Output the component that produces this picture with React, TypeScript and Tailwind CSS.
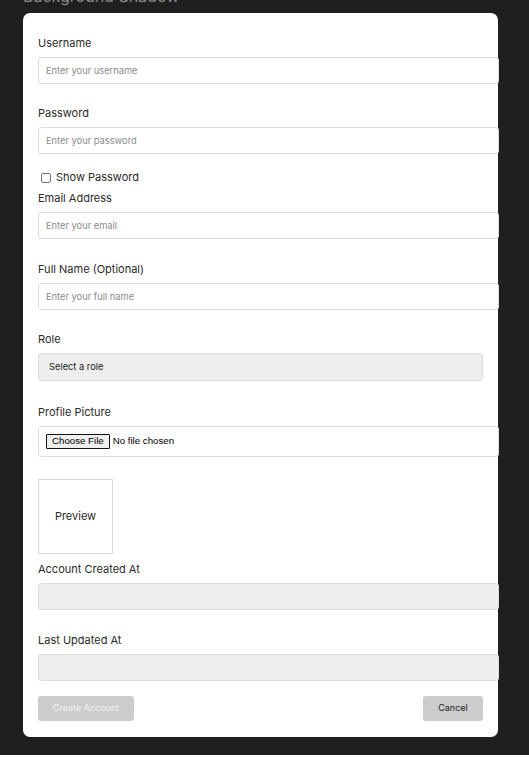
import React from "react";

const font = { fontFamily: "Inter, 'Noto Sans', sans-serif" };

function Label({ children }: { children: React.ReactNode }) {
  return (
    <div className="text-[11px] leading-[15px] text-[#2a2a2a] mb-[6px]">{children}</div>
  );
}

function TextInput({ placeholder, type = "text", disabled = false }: { placeholder?: string; type?: string; disabled?: boolean }) {
  return (
    <input
      type={type}
      placeholder={placeholder}
      disabled={disabled}
      className={
        "block w-[461px] h-[27px] px-[7px] border border-[#dcdcdc] rounded-[3px] text-[9.3px] text-[#222] placeholder:text-[#8a8a8a] outline-none " +
        (disabled ? "bg-[#efefef]" : "bg-white")
      }
    />
  );
}

export default function App() {
  return (
    <div style={font}>
      <div className="bg-[#1f1f1f] pb-[18px]">
        <div className="pl-[23px] -mt-[14px] text-[16px] leading-[20px] text-[#8c8c8c] h-[20px]">Background Shadow</div>
        <div className="ml-[23px] mt-[7px] w-[475px] bg-white rounded-[7px] px-[15px] pt-[22.5px] pb-[16px]">
          <Label>Username</Label>
          <TextInput placeholder="Enter your username" />

          <div className="mt-[22px]">
            <Label>Password</Label>
            <TextInput type="password" placeholder="Enter your password" />
          </div>

          <label className="mt-[16px] h-[16px] flex items-center gap-[5px] text-[11px] text-[#2a2a2a]">
            <span className="ml-[3px] w-[10px] h-[10px] border border-[#767676] rounded-[2px] bg-white" />
            <span>Show Password</span>
          </label>

          <div className="mt-[5.5px]">
            <Label>Email Address</Label>
            <TextInput type="email" placeholder="Enter your email" />
          </div>

          <div className="mt-[22.5px]">
            <Label>Full Name (Optional)</Label>
            <TextInput placeholder="Enter your full name" />
          </div>

          <div className="mt-[22px]">
            <Label>Role</Label>
            <div className="w-full h-[28px] flex items-center px-[10px] bg-[#eeeeee] border border-[#dcdcdc] rounded-[3px] text-[9.3px] text-[#222]">
              Select a role
            </div>
          </div>

          <div className="mt-[24px]">
            <Label>Profile Picture</Label>
            <div className="w-[461px] h-[31px] flex items-center px-[7px] border border-[#dcdcdc] rounded-[3px] bg-white">
              <span
                className="h-[15px] px-[5px] flex items-center border border-[#111] bg-[#efefef] rounded-[1px] text-[9.7px] text-black"
                style={{ fontFamily: "'Liberation Sans', Arial, sans-serif" }}
              >
                Choose File
              </span>
              <span
                className="ml-[3px] text-[9.7px] text-black"
                style={{ fontFamily: "'Liberation Sans', Arial, sans-serif" }}
              >
                No file chosen
              </span>
            </div>
          </div>

          <div className="mt-[22px] w-[75px] h-[75px] border border-[#d8d8d8] flex items-center justify-center text-[11px] text-[#2a2a2a]">
            Preview
          </div>

          <div className="mt-[8px]">
            <Label>Account Created At</Label>
            <TextInput disabled />
          </div>

          <div className="mt-[23px]">
            <Label>Last Updated At</Label>
            <TextInput disabled />
          </div>

          <div className="mt-[15px] flex justify-between">
            <button className="h-[25px] w-[96px] bg-[#cccccc] rounded-[3px] text-[9px] text-[#f2f2f2]">Create Account</button>
            <button className="h-[25px] w-[60px] bg-[#cccccc] rounded-[3px] text-[9px] text-[#222]">Cancel</button>
          </div>
        </div>
      </div>
    </div>
  );
}
